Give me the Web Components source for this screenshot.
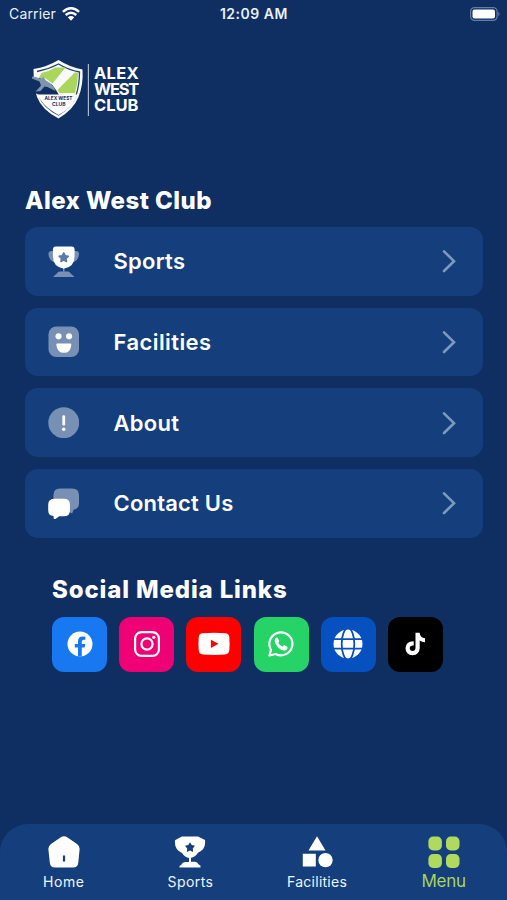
<!DOCTYPE html>
<html lang="en">
<head>
<meta charset="utf-8">
<title>Alex West Club</title>
<style>
html,body{margin:0;height:100%;background:#0f2f62;overflow:hidden}
</style>
</head>
<body>
<club-app></club-app>
<script>
const ICONS = {
  trophy: '<svg viewBox="0 0 32 32"><g fill="#7990b5"><path d="M6 5H3.500Q.5 5 .5 8q0 7 7.500 9zM26 5h2.500Q31.500 5 31.500 8q0 7-7.500 9z"/><path d="M15.300 21h1.400v5H20q2 0 3 2l3.500 3v1h-21v-1L9 28q1-2 3-2h3.300z"/></g><path fill="#fff" d="M8 .5h16q3 0 3 3v7q0 11-11 12.500Q5 21.500 5 10.500v-7q0-3 3-3z"/><path fill="#597ba8" stroke="#597ba8" stroke-width="1.500" stroke-linejoin="round" d="m16 7 1.500 2.800 3.200.6-2.300 2.200.4 3.200-2.800-1.400-2.800 1.400.4-3.200-2.300-2.200 3.200-.6z"/></svg>',
  smile: '<svg viewBox="0 0 32 32"><rect x=".5" y=".5" width="31" height="31" rx="8" fill="#7990b5"/><g fill="#fff"><circle cx="10.700" cy="10.500" r="3.100"/><circle cx="21.400" cy="10.500" r="3.100"/><path d="M9.500 17.700h13.200q1 0 1 1.500-.7 8-7.500 8t-7.700-8q0-1.500 1-1.500z"/></g></svg>',
  info: '<svg viewBox="0 0 32 32"><circle cx="16" cy="16" r="15.700" fill="#7990b5"/><path stroke="#fff" stroke-width="2.800" stroke-linecap="round" d="M16 9.700v7.800"/><circle cx="16" cy="22.700" r="1.800" fill="#fff"/></svg>',
  chat: '<svg viewBox="0 0 32 32"><path fill="#7990b5" d="M12 .5h12.500q7 0 7 7v8q0 5.500-5.500 6.500l-1.500 4-6-3.500H5.500V7.500q0-7 6.500-7z"/><path fill="#fff" d="M7 11h9q6.300 0 6.300 6v5.500q0 6.300-6.300 6.300h-4.500L6 32.500l-.4-4Q.2 28 .2 22.500V17q0-6 6.800-6z"/></svg>',
  facebook: '<svg viewBox="0 0 26 26"><circle cx="13" cy="13" r="12.500" fill="#fff"/><path fill="#1778f2" d="M11 25.500v-9H7.800v-3.600H11v-2.700q0-4.700 4.700-4.700l2.700.2v3.100h-1.600q-2 0-2 2v2.100h3.500l-.6 3.600h-2.900v9z"/></svg>',
  instagram: '<svg viewBox="0 0 26 26" fill="none" stroke="#fff" stroke-width="2.200"><rect x="1.100" y="1.100" width="23.800" height="23.800" rx="6.500"/><circle cx="13" cy="13" r="5.600"/><circle cx="19.800" cy="6.300" r="1.600" fill="#fff" stroke="none"/></svg>',
  youtube: '<svg viewBox="0 0 32 26"><path fill="#fff" d="M5 2.300q11-1 22 0 4 0 4.300 4 .6 7 0 13-.4 4-4.300 4.200-11 .9-22 0-4-.2-4.300-4.200-.6-6 0-13Q1 2.300 5 2.300z"/><path fill="#f00" d="m12.900 8.800 7.500 4-7.500 4.300z"/></svg>',
  whatsapp: '<svg viewBox="0 0 26 26"><path fill="none" stroke="#fff" stroke-width="2.200" stroke-linejoin="round" d="M1.500 24.500 3 18.700A11.500 11.500 0 1 1 7.500 23z"/><path fill="#fff" d="M7.600 7.100q1-1 2.100-.4l1.500 3.300q.1.800-1 1.800 1.500 2.800 4.500 3.900 1.200-1.500 1.700-1.400l3 1.500q.7 3-2.600 3.700-3.200.5-7-3.200Q5 10.500 7.600 7.100z"/></svg>',
  globe: '<svg viewBox="0 0 30 30"><circle cx="15" cy="15" r="14.500" fill="#fff"/><g fill="none" stroke="#0750bf" stroke-width="1.800"><path d="M0 10.200h30M0 19.600h30"/><ellipse cx="15" cy="15" rx="6.300" ry="15.800"/></g></svg>',
  tiktok: '<svg viewBox="0 0 26 26"><path fill="#fff" d="M13.500 1.700h4.100q.6 5 5.400 5.500v4q-3.100 0-5.300-1.700v7.600q-.3 7-7.100 7.200-6.900-.4-7.100-7 .4-7.300 8.200-7.100v4.300q-3.800-.4-4 2.800.2 2.700 2.800 2.700 2.900 0 3-3.300z"/></svg>',
  home: '<svg viewBox="0 0 32 32"><path fill="#fff" d="M12.800 1.300q3.200-2 6.400 0L29 8q2.900 2 2.600 5.500l-1.300 13Q29.900 31.500 25 31.500H7q-4.800 0-5.200-5L.4 13.500Q.1 10 3 8z"/><path stroke="#153f7c" stroke-width="2.200" d="M16 19.500v6"/></svg>',
  cup: '<svg viewBox="0 0 32 32"><path fill="#fff" d="m5 2 3-1.500h16L27 2l4 2q1.200 9-7 12.700-3 4.600-7 5v4h4q2.500.2 3.500 2.600l2 1.500v1.700h-21V30l2-1.500q1-2.400 3.500-2.600h4v-4q-4-.4-7-5Q0 13.200 1 4.200z"/><path fill="#153f7c" d="m16 6.200 1.700 2.800 3.300.8-2.200 2.600.3 3.500-3.100-1.400-3.100 1.400.3-3.500L11 9.800l3.300-.8z"/></svg>',
  shapes: '<svg viewBox="0 0 32 32" fill="#fff"><path d="m16 .3 8.500 14.200h-17zM1.800 17.700h13V30.500h-13z"/><circle cx="24.500" cy="24.100" r="7.200"/></svg>',
  grid: '<svg viewBox="0 0 32 32" fill="#b0d95f"><rect x=".4" y=".5" width="13.500" height="14" rx="4.700"/><rect x="18" y=".5" width="13.500" height="14" rx="4.700"/><rect x=".4" y="18" width="13.500" height="14" rx="4.700"/><rect x="18" y="18" width="13.500" height="14" rx="4.700"/></svg>'
};
function define(name, render) {
  customElements.define(name, class extends HTMLElement {
    connectedCallback() {
      if (!this.shadowRoot) this.attachShadow({mode: 'open'}).innerHTML = render(this);
    }
  });
}
define('ui-icon', e => `<style>:host{display:block;flex:none}svg{display:block;width:100%;height:100%}</style>${ICONS[e.getAttribute('name')]}`);

define('status-bar', () => `<style>
:host{display:grid;grid-template-columns:1fr auto 1fr;align-items:center;box-sizing:border-box;height:28px;padding:0 7px 1px 9px;color:#e9f0fa;font:14px Inter,sans-serif}
.l{display:flex;align-items:center;gap:6px;letter-spacing:.15px}
b{font-weight:600;font-size:14px;letter-spacing:.5px;margin-left:-1.200px}
.wifi{width:18px;height:14px}.bat{width:30px;height:14px;justify-self:end}
</style>
<div class="l"><span>Carrier</span><svg class="wifi" viewBox="0 0 18 14" fill="none" stroke="#fff" stroke-width="2.500"><path d="M.9 4.900q8.100-7.200 16.200 0M3.700 8q5.300-4.600 10.600 0"/><path fill="#fff" stroke="none" d="M5.800 10.300q3.200-2.600 6.400 0L9 13.700z"/></svg></div>
<b>12:09 AM</b>
<svg class="bat" viewBox="0 0 30 14"><rect x=".6" y=".6" width="26.500" height="12.800" rx="4" fill="none" stroke="#647da3" stroke-width="1.200"/><rect x="2.500" y="2.500" width="22.500" height="9" rx="2" fill="#fff"/><path fill="#647da3" d="M28.300 4.800q2.600 2.200 0 4.400z"/></svg>`);

define('club-logo', () => `<style>:host{display:flex;height:64px}svg{display:block;flex:none}text{font:700 5px Inter,sans-serif;fill:#0f2f62}
.name{display:flex;flex-direction:column;margin:6.500px 0 0 4px;font:700 16.500px/16.200px Inter,sans-serif;color:#fff}
.a{letter-spacing:.3px}.w{letter-spacing:-1.200px}.c{letter-spacing:-.05px}</style>
<svg width="60" height="64" viewBox="0 0 60 64">
<path fill="#f7faf9" d="M3.500 11Q17 9 28.500 2q11 7 24 9.500 1 15-4 27.500-5 12.500-20 21.500Q12 52 7 39L4 28z"/>
<path fill="none" stroke="#244475" stroke-width="1.300" d="M7 13.500Q18 11.500 28.500 6q10 6 21 8 0 13-3.500 23.500-5 12-17.500 19.500Q14 49.500 9.500 39"/>
<path fill="#a9d65b" d="M8.500 20.500 11.500 15Q19 13.500 25 9.500h10.500L22.500 25.500 15 20zM45 14.300l3 .8q0 10-3 19.900H29.500L27.500 32z"/>
<path fill="#0f2f62" d="M0 21l10-1 5 4 7 2.500L26 32l3 5H8.500L5.500 35 1 36z"/>
<path fill="#8094ae" d="M2 18.500q5 .5 8.500 2.200L13.500 19l2.500 3.500 4 2.500 3.500 3.500 2 4.500-4-2-4-2-3-.5-4 4.500-5 .5 2.500-2.500 3-3.500-1.500-4L2 20.500z"/>
<path fill="#fff" d="M6.500 36.500h41L43 45q-5 7-14.500 12Q16 50 11 42.500z"/>
<text x="14.500" y="41.700" textLength="28" lengthAdjust="spacingAndGlyphs">ALEX WEST</text><text x="22" y="48" textLength="13.500" lengthAdjust="spacingAndGlyphs">CLUB</text>
<path stroke="#a9b7ca" stroke-width="1.200" d="M58.400 6v52"/></svg>
<div class="name"><span class="a">ALEX</span><span class="w">WEST</span><span class="c">CLUB</span></div>`);

define('menu-row', e => `<style>
:host{display:flex;align-items:center;box-sizing:border-box;height:68.700px;padding:0 26px 0 22.500px;border-radius:13px;background:#153f7c;color:#fff;font:600 22px/28px Inter,sans-serif}
ui-icon{width:31.500px;height:31.500px;margin-right:34.500px}
span{flex:1;letter-spacing:var(--track,0)}
svg{width:16px;height:24px}
</style><ui-icon name="${e.getAttribute('icon')}"></ui-icon><span><slot></slot></span>
<svg viewBox="0 0 16 24" fill="none" stroke="#7f99be" stroke-width="2.600" stroke-linecap="round" stroke-linejoin="miter"><path d="M3 2.300 13 12.200 3 22"/></svg>`);

define('social-tile', e => `<style>
:host{display:grid;place-items:center;width:55px;height:55px;border-radius:12px;background:${e.getAttribute('color')}}
ui-icon{width:${e.getAttribute('w') || 26}px;height:${e.getAttribute('h') || 26}px}
</style><ui-icon name="${e.getAttribute('icon')}"></ui-icon>`);

define('nav-item', () => '<style>:host{display:flex;flex-direction:column;align-items:center;padding-top:12px;color:#f0f5fc;font:14px/20px Inter,sans-serif}:host([active]){color:#a9d35f;font-size:17px}span{margin-top:4.200px;letter-spacing:var(--track,0)}:host([active]) span{margin-top:3px}</style><slot name="icon"></slot><span><slot></slot></span>');
define('bottom-nav', () => '<style>:host{display:grid;grid-template-columns:repeat(4,1fr);box-sizing:border-box;height:76px;padding-left:.5px;border-radius:28px 28px 0 0;background:#153f7c}</style><slot></slot>');

define('club-app', () => `<style>
:host{display:flex;flex-direction:column;width:507px;height:900px;background:#0f2f62;color:#fff;font-family:Inter,sans-serif}
club-logo{margin:30px 0 0 30px}
h2{margin:0;font:800 24px/30px Inter,sans-serif}
.title{margin:64px 0 11px 25px;letter-spacing:.44px}
.list{display:flex;flex-direction:column;gap:12px;margin:0 24.500px 0 25px}
section{margin:37px 0 0 52px}
section h2{letter-spacing:.86px}
.social{display:flex;gap:12.200px;margin-top:12px}
bottom-nav{margin-top:auto}
bottom-nav ui-icon{width:32px;height:32px}
</style>
<status-bar></status-bar>
<club-logo></club-logo>
<h2 class="title">Alex West Club</h2>
<div class="list">
<menu-row icon="trophy" style="--track:.25px">Sports</menu-row>
<menu-row icon="smile" style="--track:.42px">Facilities</menu-row>
<menu-row icon="info" style="--track:.3px">About</menu-row>
<menu-row icon="chat" style="--track:.2px">Contact Us</menu-row>
</div>
<section><h2>Social Media Links</h2><div class="social">
<social-tile icon="facebook" color="#1778f2"></social-tile>
<social-tile icon="instagram" color="#f00075"></social-tile>
<social-tile icon="youtube" color="#f00" w="32"></social-tile>
<social-tile icon="whatsapp" color="#25d366"></social-tile>
<social-tile icon="globe" color="#0750bf" w="30" h="30"></social-tile>
<social-tile icon="tiktok" color="#000"></social-tile>
</div></section>
<bottom-nav>
<nav-item style="--track:.6px"><ui-icon slot="icon" name="home"></ui-icon>Home</nav-item>
<nav-item style="--track:.4px"><ui-icon slot="icon" name="cup"></ui-icon>Sports</nav-item>
<nav-item style="--track:.25px"><ui-icon slot="icon" name="shapes"></ui-icon>Facilities</nav-item>
<nav-item active style="--track:-.25px"><ui-icon slot="icon" name="grid"></ui-icon>Menu</nav-item>
</bottom-nav>`);
</script>
</body>
</html>
